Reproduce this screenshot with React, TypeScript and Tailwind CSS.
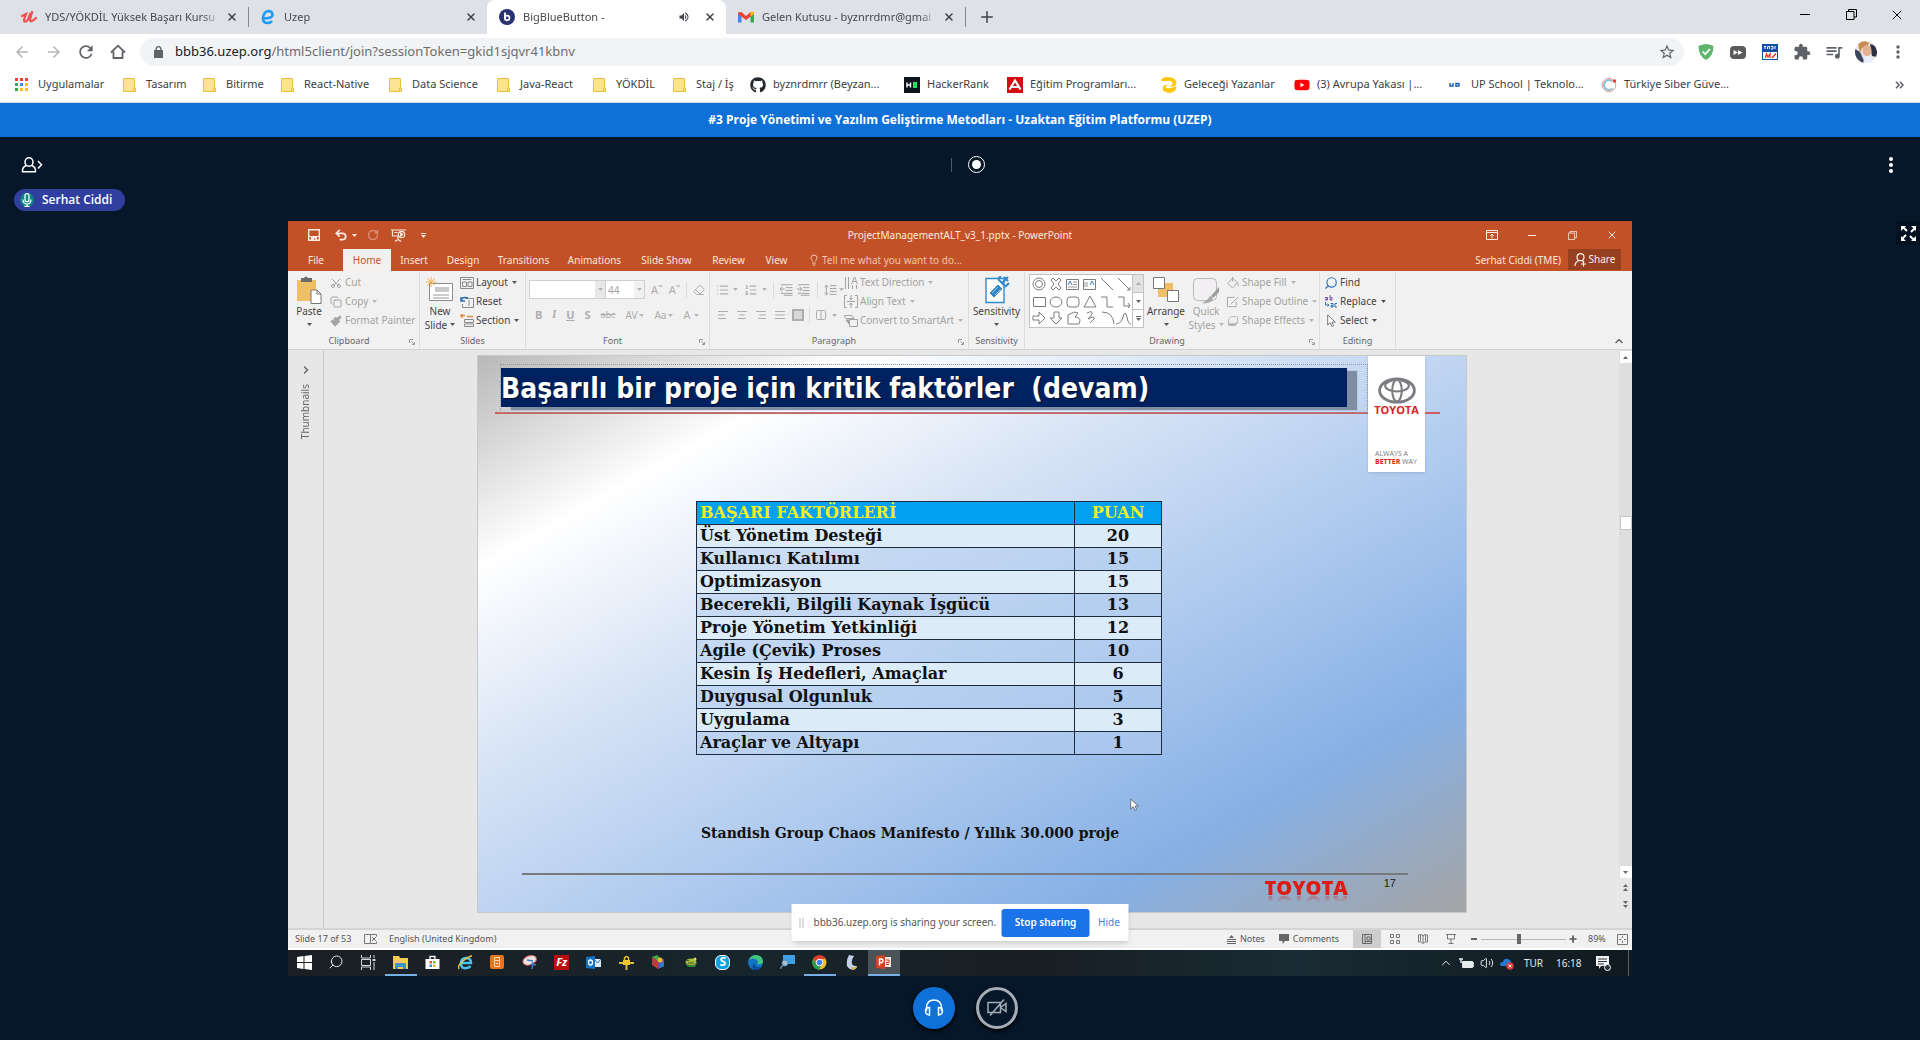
import React from "react";
import {
  RotateCw, X, Plus, Copy as CopyIcon, Scissors, Undo2, Search, Lightbulb, ChevronRight, ChevronUp,
  AlignLeft, AlignCenter, AlignRight, AlignJustify, List, ListOrdered, Eraser, Columns2, Paintbrush, Volume2,
} from "lucide-react";
import { FaGithub, FaYoutube } from "react-icons/fa";
import { MdArrowBack, MdArrowForward, MdRefresh, MdStarBorder, MdExtension, MdQueueMusic, MdMoreVert, MdVolumeUp } from "react-icons/md";

const UI = "font-['Noto_Sans','Open_Sans',sans-serif]";

type Kids = { children?: React.ReactNode };

/* ---------- small drawings ---------- */

function Caret({ className = "text-[#666]" }: { className?: string }) {
  return (
    <svg viewBox="0 0 5 3" className={`h-[3px] w-[5px] shrink-0 ${className}`}>
      <path d="M0 0h5L2.5 3z" fill="currentColor" />
    </svg>
  );
}

function Udemy() {
  return (
    <svg viewBox="0 0 16 16" className="h-4 w-4 shrink-0">
      <path d="M1 7l4-2-2 6q0 2 2 1.500T9 5l2-1M11 3L9 10q0 3 2 2t4-3" fill="none" stroke="#ec5252" strokeWidth="2.300" strokeLinecap="round" />
    </svg>
  );
}

function BlueE() {
  return (
    <svg viewBox="0 0 16 16" className="h-4 w-4 shrink-0">
      <path d="M3 9.500Q13 9.500 12.500 5.500 12 2 8.500 2 3.500 2.500 3 9.500 3 14 7.500 14q3 0 4.500-2" fill="none" stroke="#1c9cf6" strokeWidth="2.600" />
    </svg>
  );
}

function BBB() {
  return (
    <svg viewBox="0 0 16 16" className="h-4 w-4 shrink-0">
      <circle cx="8" cy="8" r="8" fill="#283274" />
      <path d="M6 3.500V9" stroke="#fff" strokeWidth="1.800" fill="none" />
      <circle cx="8.200" cy="9" r="2.300" stroke="#fff" strokeWidth="1.800" fill="none" />
    </svg>
  );
}

function Gmail() {
  return (
    <svg viewBox="0 0 16 12" className="h-3 w-4 shrink-0">
      <path d="M0 1.500V11.500H3.500V5z" fill="#4285f4" />
      <path d="M16 1.500V11.500H12.500V5z" fill="#34a853" />
      <path d="M0 1.500L3.500 1 8 5l4.500-4 3.500.5V3L8 9 0 3z" fill="#ea4335" />
      <path d="M12.500 1q3.500-1.500 3.500 2l-3.500 2.500z" fill="#fbbc04" />
    </svg>
  );
}

function Folder() {
  return (
    <svg viewBox="0 0 13 14" className="h-3.5 w-[13px] shrink-0">
      <path d="M.5.500h11v9.500h1v3.500H.5z" fill="#fee391" stroke="#e9c03f" />
      <path d="M10.500 13.500v-3.500h1.500" fill="none" stroke="#e9c03f" />
    </svg>
  );
}

function AppsGrid() {
  const c = ["#ea4335", "#ea4335", "#ea4335", "#34a853", "#4285f4", "#fbbc04", "#34a853", "#fbbc04", "#fbbc04"];
  return (
    <svg viewBox="0 0 13 13" className="h-[13px] w-[13px] shrink-0">
      {c.map((f, i) => (
        <rect key={i} x={(i % 3) * 5} y={Math.floor(i / 3) * 5} width="3" height="3" fill={f} />
      ))}
    </svg>
  );
}

function Restore({ className = "h-[11px] w-[11px]" }: { className?: string }) {
  return (
    <svg viewBox="0 0 11 11" className={className}>
      <path d="M.5 2.500h7.500v8H.5zM2.500 2.500V.500h8v7.500H8" fill="none" stroke="currentColor" />
    </svg>
  );
}

function Avatar() {
  return (
    <svg viewBox="0 0 22 22" className="h-[22px] w-[22px]">
      <defs><clipPath id="av"><circle cx="11" cy="11" r="11" /></clipPath></defs>
      <g clipPath="url(#av)">
        <rect width="22" height="22" fill="#e9e4e2" />
        <path d="M15 3q6 1 7 7v6l-5-1z" fill="#2c2f3d" />
        <path d="M0 8l5 3 5 11H0z" fill="#39475c" />
        <path d="M3 2q5-4 11 0l-2 4-5 1-2 5z" fill="#c98b52" />
        <ellipse cx="12" cy="9.500" rx="4.500" ry="5.500" fill="#e3b294" />
        <path d="M10 15l5 0 4 7H8z" fill="#eaf0fb" />
      </g>
    </svg>
  );
}

function ToyotaMark() {
  return (
    <svg viewBox="0 0 40 28" className="h-[27px] w-[38px]" fill="none" stroke="#7b7d80">
      <ellipse cx="20" cy="14" rx="18.300" ry="12.300" strokeWidth="3" />
      <ellipse cx="20" cy="9" rx="12.500" ry="6" strokeWidth="2.200" />
      <ellipse cx="20" cy="14" rx="5" ry="11.500" strokeWidth="2.200" />
    </svg>
  );
}

/* ---------- browser chrome ---------- */

function Tab({ icon, title, active, audio, divider }: { icon: React.ReactNode; title: string; active?: boolean; audio?: boolean; divider?: boolean }) {
  return (
    <div className={`relative flex h-full w-[239px] items-center pl-3 pr-2 ${active ? "rounded-t-lg bg-white" : ""}`}>
      {icon}
      <button className="ml-2 flex-1 whitespace-nowrap text-left text-[11px] text-[#45494d] [mask-image:linear-gradient(to_right,#000_90%,transparent)]">{title}</button>
      {audio && <MdVolumeUp className="mr-2 h-3 w-3 shrink-0 text-[#45494d]" />}
      <button aria-label="Close tab" className="ml-1 flex h-4 w-4 shrink-0 items-center justify-center text-[#3c4043]">
        <X className="h-3 w-3" strokeWidth={3} />
      </button>
      {divider && <span className="absolute right-[-1px] top-[7px] h-5 w-px bg-[#85898d]" />}
    </div>
  );
}

function TabStrip() {
  return (
    <div className="flex h-[34px] items-stretch bg-[#dee1e6] pl-[9px]">
      <Tab icon={<Udemy />} title="YDS/YÖKDİL Yüksek Başarı Kursu" divider />
      <Tab icon={<BlueE />} title="Uzep" />
      <Tab icon={<BBB />} title="BigBlueButton -" active audio />
      <Tab icon={<Gmail />} title="Gelen Kutusu - byznrrdmr@gmai" divider />
      <button aria-label="New tab" className="ml-2.5 flex w-6 items-center justify-center text-[#3c4043]">
        <Plus className="h-[18px] w-[18px]" />
      </button>
      <div className="ml-auto flex h-[29px] text-black">
        <button aria-label="Minimize" className="flex w-[46px] items-center justify-center"><span className="h-px w-2.5 bg-black" /></button>
        <button aria-label="Restore" className="flex w-[46px] items-center justify-center"><Restore /></button>
        <button aria-label="Close" className="flex w-[46px] items-center justify-center"><X className="h-4 w-4" strokeWidth={1.4} /></button>
      </div>
    </div>
  );
}

function ToolBtn({ label, children }: Kids & { label: string }) {
  return <button aria-label={label} className="flex h-8 w-8 shrink-0 items-center justify-center text-[#5f6368]">{children}</button>;
}

function AddressBar() {
  return (
    <div className="flex h-[35px] items-center bg-white px-1.5 pt-px">
      <ToolBtn label="Back"><MdArrowBack className="h-[18px] w-[18px] text-[#b4b6b9]" /></ToolBtn>
      <ToolBtn label="Forward"><MdArrowForward className="h-[18px] w-[18px] text-[#b4b6b9]" /></ToolBtn>
      <ToolBtn label="Reload"><MdRefresh className="h-5 w-5" /></ToolBtn>
      <ToolBtn label="Home">
        <svg viewBox="0 0 16 16" className="h-4 w-4"><path d="M3.500 7.500V14h9V7.500M1 8.500L8 1.700l7 6.800" fill="none" stroke="currentColor" strokeWidth="1.800" /></svg>
      </ToolBtn>
      <div className="ml-1.5 mr-1.5 flex h-7 flex-1 items-center rounded-full bg-[#f1f3f4] pl-3.5 pr-2">
        <svg viewBox="0 0 9 12" className="h-3 w-[9px] shrink-0"><path d="M0 4h9v8H0z" fill="#5f6368" /><path d="M2.200 4.500V3a2.300 2.300 0 0 1 4.600 0v1.500" fill="none" stroke="#5f6368" strokeWidth="1.300" /></svg>
        <div className="ml-3 flex-1 whitespace-nowrap text-[13px] text-[#6a6e72]"><span className="text-[#202124]">bbb36.uzep.org</span>/html5client/join?sessionToken=gkid1sjqvr41kbnv</div>
        <MdStarBorder className="h-[18px] w-[18px] text-[#5f6368]" />
      </div>
      <ToolBtn label="AdGuard">
        <svg viewBox="0 0 16 16" className="h-4 w-4"><path d="M.5 2Q5 0 8 0t7.500 2q0 10-7.500 14Q.5 12 .5 2z" fill="#5fb56b" /><path d="M4.500 7.500l2.700 2.700L12 5" fill="none" stroke="#fff" strokeWidth="1.700" /></svg>
      </ToolBtn>
      <ToolBtn label="Playback speed">
        <svg viewBox="0 0 16 13" className="h-[13px] w-4"><rect width="16" height="13" rx="4" fill="#5b5b5b" /><path d="M3.500 4l4.500 2.500-4.500 2.500zM8 4l4.500 2.500L8 9z" fill="#fff" /></svg>
      </ToolBtn>
      <ToolBtn label="Sabis">
        <svg viewBox="0 0 16 16" className="h-4 w-4"><path d="M0 0h16v16H0z" fill="#0d4ea6" /><path d="M1 8h14v7H1z" fill="#fff" /><path d="M2 2.500h2M2 4h2M5.500 5V2.500h2V5M9 2.500h2V5H9M13 2v3" stroke="#fff" fill="none" /><path d="M3.500 14l1-4 1.500 3 2-3v4M10 14l4-4.500" stroke="#e2312c" strokeWidth="1.300" fill="none" /></svg>
      </ToolBtn>
      <ToolBtn label="Extensions"><MdExtension className="h-[18px] w-[18px]" /></ToolBtn>
      <ToolBtn label="Media"><MdQueueMusic className="h-5 w-5" /></ToolBtn>
      <ToolBtn label="Profile"><Avatar /></ToolBtn>
      <ToolBtn label="Menu"><MdMoreVert className="h-5 w-5" /></ToolBtn>
    </div>
  );
}

function Bookmark({ w, icon, children }: Kids & { w: string; icon: React.ReactNode }) {
  return (
    <a href="#" className={`flex shrink-0 items-center ${w}`}>
      <span className="flex w-[23px] shrink-0 items-center">{icon}</span>
      <span className="whitespace-nowrap">{children}</span>
    </a>
  );
}

function Bookmarks() {
  return (
    <nav className="flex h-[34px] items-center border-b border-[#d5d8dc] bg-white pb-0.5 pl-[15px] pr-4 text-[11px] text-[#3c4043]">
      <Bookmark w="w-[108px]" icon={<AppsGrid />}>Uygulamalar</Bookmark>
      <Bookmark w="w-20" icon={<Folder />}>Tasarım</Bookmark>
      <Bookmark w="w-[78px]" icon={<Folder />}>Bitirme</Bookmark>
      <Bookmark w="w-[108px]" icon={<Folder />}>React-Native</Bookmark>
      <Bookmark w="w-[108px]" icon={<Folder />}>Data Science</Bookmark>
      <Bookmark w="w-24" icon={<Folder />}>Java-React</Bookmark>
      <Bookmark w="w-20" icon={<Folder />}>YÖKDİL</Bookmark>
      <Bookmark w="w-[77px]" icon={<Folder />}>Staj / İş</Bookmark>
      <Bookmark w="w-[154px]" icon={<FaGithub className="h-4 w-4 text-[#24292e]" />}>byznrdmrr (Beyzan...</Bookmark>
      <Bookmark w="w-[103px]" icon={<svg viewBox="0 0 16 16" className="h-4 w-4"><path d="M0 0h16v16H0z" fill="#0e141e" /><path d="M3 5.500v5M6.500 5.500v5M3 8h3.500" stroke="#fff" strokeWidth="1.400" /><path d="M9 5h4v6H9z" fill="#1ee65c" /></svg>}>HackerRank</Bookmark>
      <Bookmark w="w-[154px]" icon={<svg viewBox="0 0 16 16" className="h-4 w-4"><path d="M0 0h16v16H0z" fill="#d40d12" /><path d="M2.500 12.500L8 3.500l5.500 9M5 10h6" fill="none" stroke="#fff" strokeWidth="2.200" /></svg>}>Eğitim Programları...</Bookmark>
      <Bookmark w="w-[133px]" icon={<svg viewBox="0 0 16 16" className="h-4 w-4"><path d="M0 3q2-3 6-3 9 0 9.500 6-1 5-8 3 4 0 4-2.500Q11 3 5 4 1 5 0 3z" fill="#fdc60a" /><path d="M15.500 9q0 6-7 7Q1 15 1.500 11q1-4 7-3-4 0-4 2 1 2 5 1t6-2z" fill="#fdc60a" /></svg>}>Geleceği Yazanlar</Bookmark>
      <Bookmark w="w-[154px]" icon={<FaYoutube className="h-4 w-4 text-[#f00]" />}>(3) Avrupa Yakası |...</Bookmark>
      <Bookmark w="w-[153px]" icon={<svg viewBox="0 0 16 16" className="h-4 w-4" fill="none" stroke="#1a66b5" strokeWidth="1.500"><path d="M2 6v3h3V6M8 10V6.500h3V9H8" /></svg>}>UP School | Teknolo...</Bookmark>
      <Bookmark w="w-[150px]" icon={<svg viewBox="0 0 16 16" className="h-4 w-4" fill="none"><circle cx="8" cy="8" r="6.800" stroke="#ef9a94" /><path d="M11.500 4.500a5 5 0 1 0 0 7" stroke="#8bbfd1" strokeWidth="2" /><circle cx="13.500" cy="4" r="1.700" fill="#e53e38" /></svg>}>Türkiye Siber Güve...</Bookmark>
      <button aria-label="More bookmarks" className="ml-auto text-[#5f6368]">
        <svg viewBox="0 0 9 8" className="h-2 w-[9px]" fill="none" stroke="currentColor" strokeWidth="1.600"><path d="M1 .7L4 4 1 7.300M5 .7L8 4 5 7.300" /></svg>
      </button>
    </nav>
  );
}

/* ---------- PowerPoint ---------- */

function PptTitle() {
  return (
    <div className="flex h-7 items-center text-[10px] text-[#fbe9e2]">
      <div className="flex flex-1 items-center">
        <svg viewBox="0 0 12 12" className="ml-5 h-3 w-3"><path d="M.7.700h10.600v10.600H.7z" fill="none" stroke="currentColor" strokeWidth="1.400" /><path d="M1 7h10v1H1zM3 8h6v4H7.500V9.500H6V12H3z" fill="currentColor" /></svg>
        <Undo2 className="ml-3.5 h-3.5 w-3.5" strokeWidth={3} />
        <span className="ml-1"><Caret className="text-[#fbe9e2]" /></span>
        <RotateCw className="ml-2.5 h-3 w-3 opacity-40" strokeWidth={3} />
        <svg viewBox="0 0 15 13" className="ml-3 h-[13px] w-[15px]" fill="none" stroke="currentColor" strokeWidth="1.200"><path d="M0 1h15M1.500 1v6h6M7 7.500v3M4 12.500l3-2 3 2M3.500 3.500h3" /><circle cx="10.500" cy="5.500" r="3.200" /><path d="M9.700 4v3l2-1.500z" fill="currentColor" /></svg>
        <span className="ml-[15px] flex flex-col gap-px"><span className="h-px w-[5px] bg-[#fbe9e2]" /><Caret className="text-[#fbe9e2]" /></span>
      </div>
      <div className="text-[10px]">ProjectManagementALT_v3_1.pptx - PowerPoint</div>
      <div className="flex flex-1 justify-end">
        {[
          <svg key="r" viewBox="0 0 12 10" className="h-2.5 w-3" fill="none" stroke="currentColor"><path d="M.5.500h11v9H.5zM.5 2.500h11M6 8.500V4M4 6l2-2 2 2" /></svg>,
          <span key="m" className="h-px w-2 bg-[#fbe9e2]" />,
          <Restore key="s" className="h-[9px] w-[9px]" />,
          <X key="x" className="h-3 w-3" strokeWidth={2} />,
        ].map((n, i) => (
          <button key={i} aria-label={["Ribbon display", "Minimize", "Restore", "Close"][i]} className="flex h-6 w-10 items-center justify-center">{n}</button>
        ))}
      </div>
    </div>
  );
}

function PptTabs() {
  const tabs: [string, string][] = [
    ["File", "w-[54px]"], ["Home", "w-12"], ["Insert", "w-[46px]"], ["Design", "w-[52px]"], ["Transitions", "w-[69px]"],
    ["Animations", "w-[73px]"], ["Slide Show", "w-[71px]"], ["Review", "w-[53px]"], ["View", "w-[43px]"],
  ];
  return (
    <div className="flex h-[22px] items-stretch pl-px text-[10px] text-[#fbe6dd]">
      {tabs.map(([t, w]) => (
        <button key={t} className={`${w} whitespace-nowrap ${t === "Home" ? "bg-[#f2f1f0] text-[#c8512a]" : ""}`}>{t}</button>
      ))}
      <label className="flex items-center pl-2.5 text-[#f2c3ae]">
        <Lightbulb className="mr-0.5 h-3.5 w-3" />
        <input aria-label="Tell me" placeholder="Tell me what you want to do..." className="w-40 bg-transparent outline-none placeholder:text-[#f2c3ae]" />
      </label>
      <span className="ml-auto mr-[7px] self-center">Serhat Ciddi (TME)</span>
      <button className="mb-px mr-[11px] flex w-[53px] items-center justify-center gap-0.5 bg-[#97401f] text-[#fdf0ea]">
        <svg viewBox="0 0 13 14" className="h-3.5 w-[13px]" fill="none" stroke="currentColor" strokeWidth="1.200"><circle cx="6.500" cy="4.200" r="3.500" /><path d="M1 13q0-4 4-5.500M8 7.500l2 1.500M9.500 8.500v5M7 11h5" /></svg>
        Share
      </button>
    </div>
  );
}

function Group({ label, w, children, launcher }: Kids & { label: string; w: string; launcher?: boolean }) {
  return (
    <section className={`relative flex shrink-0 flex-col border-r border-[#dcdcdc] ${w}`}>
      <div className="flex h-[61px]">{children}</div>
      <div className={`text-center text-[9px] leading-4 text-[#666] ${launcher ? "pr-2.5" : ""}`}>{label}</div>
      {launcher && (
        <svg viewBox="0 0 6 6" className="absolute bottom-1 right-1 h-1.5 w-1.5" fill="none" stroke="#999"><path d="M.5 4V.500H4M2.500 2.500l3 3M5.500 3v2.500H3" /></svg>
      )}
    </section>
  );
}

function Rows({ children, className = "" }: Kids & { className?: string }) {
  return <div className={`pt-px ${className}`}>{children}</div>;
}

function Row({ icon, children, dim, caret }: Kids & { icon: React.ReactNode; dim?: boolean; caret?: boolean }) {
  return (
    <button className={`flex h-[19px] items-center gap-0.5 whitespace-nowrap text-[10px] ${dim ? "text-[#a3a3a3]" : "text-[#444]"}`}>
      <span className="flex w-3.5 justify-center">{icon}</span>
      {children}
      {caret && <span className="ml-0.5"><Caret className={dim ? "text-[#b5b5b5]" : "text-[#555]"} /></span>}
    </button>
  );
}

function Big({ icon, l1, l2, dim, w }: { icon: React.ReactNode; l1: string; l2?: string; dim?: boolean; w: string }) {
  return (
    <button className={`flex shrink-0 flex-col items-center pt-1 text-[10px] leading-[14px] ${w} ${dim ? "text-[#a3a3a3]" : "text-[#444]"}`}>
      <span className="flex h-7 items-center">{icon}</span>
      <span>{l1}</span>
      <span className="flex h-[13px] items-center gap-[3px] whitespace-nowrap">{l2}<Caret className={dim ? "text-[#b5b5b5]" : "text-[#555]"} /></span>
    </button>
  );
}

const gi = "h-3.5 w-3.5 text-[#adadad]";

function ShapesGallery() {
  return (
    <div className="ml-1 mt-0.5 flex h-[54px] w-[115px] shrink-0 border border-[#c2c2c2] bg-white">
      <svg viewBox="0 0 102 52" className="h-[52px] w-[102px]" fill="none" stroke="#7c7c7c">
        <circle cx="9" cy="9" r="6" /><circle cx="9" cy="9" r="3.500" />
        <path d="M21 5l2-2 3 3 3-3 2 2-3 4 3 4-2 2-3-3-3 3-2-2 3-4z" />
        <path d="M36.500 4.500h12v10h-12zM53.500 4.500h12v10h-12z" /><path d="M43 7h4M43 9.500h4M38 12h9M55 7v5M57 7v5" stroke="#9a9a9a" />
        <path d="M38 10l2-4 2 4M60 10l2-4 2 4" stroke="#3f7fc0" />
        <path d="M71 3l12 12M88 3l12 12M97 15h3v-3" />
        <path d="M3.500 22.500h12v9h-12z" /><ellipse cx="26" cy="27" rx="6" ry="5" /><rect x="37" y="22" width="12" height="10" rx="3" />
        <path d="M60 21l6 11H54zM71 22h6v10h6M88 22h6v9h6M98 28l2 3-2 2" />
        <path d="M3 41h6v-4l6 6-6 6v-4H3zM24 37h5v6h3l-6 6-6-6h4zM38 49V40l6-3 4 1-3 4q5 0 5 4l-1 3zM57 38q6-3 5 1l-4 5q7-4 6 0l-4 4M72 37q11 0 12 12M86 49q5 0 7-7 2-8 4 0 1 7 4 7" />
      </svg>
      <div className="flex flex-1 flex-col divide-y divide-[#c2c2c2] border-l border-[#c2c2c2]">
        <span className="flex flex-1 items-center justify-center bg-[#e2e2e2]"><span className="rotate-180"><Caret className="text-[#aaa]" /></span></span>
        <span className="flex flex-1 items-center justify-center"><Caret /></span>
        <span className="flex flex-1 flex-col items-center justify-center gap-px"><span className="h-px w-[5px] bg-[#666]" /><Caret /></span>
      </div>
    </div>
  );
}

function Ribbon() {
  return (
    <div className="relative flex h-[79px] border-b border-[#d2d2d2] bg-[#f2f1f1] pl-px pt-px">
      <Group label="Clipboard" w="w-[131px]" launcher>
        <Big w="w-10" l1="Paste" icon={<svg viewBox="0 0 25 28" className="h-7 w-[25px]"><path d="M0 4h19v21H0z" fill="#efbf66" /><path d="M4 2h3q2-3 4 0h4v4H4z" fill="#6b6b6b" /><path d="M14 14h6l4 4v9.500H14z" fill="#fff" stroke="#777" /><path d="M20 14v4h4" fill="none" stroke="#777" /></svg>} />
        <Rows>
          <Row dim icon={<Scissors className="h-3 w-3 -rotate-90" />}>Cut</Row>
          <Row dim caret icon={<CopyIcon className="h-3 w-3" />}>Copy</Row>
          <Row dim icon={<Paintbrush className="h-3 w-3 fill-current" />}>Format Painter</Row>
        </Rows>
      </Group>
      <Group label="Slides" w="w-[106px]">
        <Big w="w-10" l1="New" l2="Slide" icon={<svg viewBox="0 0 28 26" className="h-[26px] w-7"><path d="M3.500 6.500h23v17h-23z" fill="#fff" stroke="#8b8b8b" /><path d="M9 10h14v5H9z" fill="#c9c9c9" /><path d="M7 18h16M7 21h16" stroke="#999" /><path d="M5 0v10M0 5h10M1.500 1.500l7 7M8.500 1.500l-7 7" stroke="#f0b04c" /></svg>} />
        <Rows>
          <Row caret icon={<svg viewBox="0 0 14 12" className="h-3 w-3.5" fill="none" stroke="#8a8a8a"><path d="M.5.500h13v11H.5zM2.500 2.500h9M2.500 5h4v4.500h-4zM8 5h4v4.500H8z" /></svg>}>Layout</Row>
          <Row icon={<svg viewBox="0 0 14 12" className="h-3 w-3.5" fill="none" stroke="#8a8a8a"><path d="M5 2.500h8.500v9h-11V8M9 4v6" /><path d="M1 5q1-5 7-3M1 1v4h4" stroke="#2a6fb4" strokeWidth="1.500" /></svg>}>Reset</Row>
          <Row caret icon={<svg viewBox="0 0 14 13" className="h-[13px] w-3.5" fill="none" stroke="#8a8a8a"><path d="M4.500 5.500h9v3h-9zM4.500 10h9v2.500h-9z" /><path d="M0 1.500h5M7 2.500h6M2 0v4" stroke="#e58a3c" strokeWidth="1.500" /></svg>}>Section</Row>
        </Rows>
      </Group>
      <Group label="Font" w="w-[184px]" launcher>
        <div className="flex-1 pl-[3px] pt-2 text-[#adadad]">
          <div className="flex items-center">
            <div className="flex h-[19px] w-[77px] border border-[#cfcfcf]">
              <select aria-label="Font name" className="flex-1 appearance-none bg-white" />
              <span className="flex w-2.5 items-center justify-center bg-[#e8e8e8]"><Caret className="text-[#b5b5b5]" /></span>
            </div>
            <div className="flex h-[19px] w-[39px] border border-l-0 border-[#cfcfcf]">
              <select aria-label="Font size" className="flex-1 appearance-none bg-white px-0.5 text-[10px] leading-4 text-[#a3a3a3]"><option>44</option></select>
              <span className="flex w-2.5 items-center justify-center bg-[#f2f1f1]"><Caret className="text-[#b5b5b5]" /></span>
            </div>
            <span className="ml-1.5 text-[11px] leading-4">Aˆ</span><span className="ml-1.5 text-[11px] leading-4">Aˇ</span>
            <span className="mx-1.5 h-4 w-px bg-[#dcdcdc]" /><Eraser className="h-3 w-3" />
          </div>
          <div className="mt-1.5 flex h-5 items-center gap-2.5 pl-1.5 text-[11px] leading-4">
            <b>B</b><i className="font-serif font-bold">I</i><u className="font-bold">U</u><b>S</b><s className="text-[9px]">abc</s>
            <span className="flex items-center gap-0.5 text-[10px]">AV<Caret className="text-[#b5b5b5]" /></span>
            <span className="flex items-center gap-0.5 text-[10px]">Aa<Caret className="text-[#b5b5b5]" /></span>
            <span className="flex items-center gap-1">A<Caret className="text-[#b5b5b5]" /></span>
          </div>
        </div>
      </Group>
      <Group label="Paragraph" w="w-[259px]" launcher>
        <div className="w-[134px] pl-1.5 pt-2">
          <div className="flex h-[19px] items-center">
            <List className={gi} /><span className="ml-1 mr-1.5"><Caret className="text-[#b5b5b5]" /></span>
            <ListOrdered className={gi} /><span className="ml-1"><Caret className="text-[#b5b5b5]" /></span>
            <span className="mx-1.5 h-4 w-px bg-[#dcdcdc]" />
            <svg viewBox="0 0 14 12" className="h-3 w-3.5 text-[#a2a2a2]" fill="none" stroke="currentColor"><path d="M1 .5h12M6 3.500h7M6 6.500h7M1 9.500h12M4 11.500h9M0 5h5M2.500 2.500L0 5l2.500 2.500" /></svg>
            <svg viewBox="0 0 14 12" className="ml-1 h-3 w-3.5 text-[#a2a2a2]" fill="none" stroke="currentColor"><path d="M1 .5h12M6 3.500h7M6 6.500h7M1 9.500h12M4 11.500h9M0 5h5M2.500 2.500L5 5 2.500 7.500" /></svg>
            <span className="mx-1.5 h-4 w-px bg-[#dcdcdc]" />
            <svg viewBox="0 0 14 12" className="h-3 w-3.5 text-[#a2a2a2]" fill="none" stroke="currentColor"><path d="M6 1.500h7M6 4.500h7M6 7.500h7M6 10.500h7M2.500 1v10M.5 3l2-2 2 2M.5 9l2 2 2-2" /></svg>
            <span className="ml-0.5"><Caret className="text-[#b5b5b5]" /></span>
          </div>
          <div className="mt-1.5 flex h-5 items-center gap-[5px]">
            <AlignLeft className="h-3 w-3.5 text-[#adadad]" /><AlignCenter className="h-3 w-3.5 text-[#adadad]" /><AlignRight className="h-3 w-3.5 text-[#adadad]" /><AlignJustify className="h-3 w-3.5 text-[#adadad]" />
            <span className="h-3 w-3 border-2 border-[#adadad] bg-[#d8d8d8]" /><span className="h-4 w-px bg-[#dcdcdc]" /><Columns2 className="h-3 w-3 text-[#adadad]" /><Caret className="text-[#b5b5b5]" />
          </div>
        </div>
        <Rows>
          <Row dim caret icon={<svg viewBox="0 0 14 14" className="h-3.5 w-3.5" fill="none" stroke="currentColor"><path d="M1.500 1v12M4.500 1v12M8.500 9v4M12.500 9v4M7.500 8l3-7 3 7M9 5.500h3" /></svg>}>Text Direction</Row>
          <Row dim caret icon={<svg viewBox="0 0 14 13" className="h-[13px] w-3.5" fill="none" stroke="currentColor"><path d="M3 .5H.5v12H3M11 .5h2.500v12H11M3 6.500h8M7 0v5M5.500 3L7 5l1.500-2M7 13V8M5.500 10L7 8l1.500 2" /></svg>}>Align Text</Row>
          <Row dim caret icon={<svg viewBox="0 0 14 12" className="h-3 w-3.5" fill="none" stroke="currentColor"><path d="M0 .5h8l2 3H2zM5.500 4.500h8v7h-8z" /><path d="M2 5h3v4z" fill="currentColor" /></svg>}>Convert to SmartArt</Row>
        </Rows>
      </Group>
      <Group label="Sensitivity" w="w-14">
        <Big w="w-full" l1="Sensitivity" icon={<svg viewBox="0 0 26 28" className="h-7 w-[26px]" fill="none"><path d="M2 2.500h18v24H2z" fill="#fff" stroke="#2e8bd0" strokeWidth="1.400" /><path d="M5 17l9-9 5 5-9 9z" fill="#2f84c6" stroke="#fff" /><path d="M8 17l6-6M11 19l6-6" stroke="#bcdcf3" strokeWidth=".8" /><path d="M14 3l3-3M18 7l6-6M22 10l3-3M14 3l8 8M20 1l4 4" stroke="#2e8bd0" strokeWidth="2" /></svg>} />
      </Group>
      <Group label="Drawing" w="w-[295px]" launcher>
        <ShapesGallery />
        <Big w="w-11" l1="Arrange" icon={<svg viewBox="0 0 26 26" className="h-[26px] w-[26px]"><path d="M5 6h15v14H5z" fill="#efbf66" /><path d="M.5.500h11v11H.5zM14.500 13.500h11v11h-11z" fill="#fff" stroke="#777" /></svg>} />
        <Big dim w="w-9" l1="Quick" l2="Styles" icon={<svg viewBox="0 0 27 27" className="h-[27px] w-[27px]"><rect x=".5" y="1.500" width="23" height="22" rx="4" fill="#f2eff2" stroke="#b9b9b9" /><path d="M26 10L18 19l2 2 6-6z" fill="#9a9a9a" /><path d="M17 19q4 2 2 5-4 3-10 2 5-2 8-7z" fill="#a8a8a8" /></svg>} />
        <Rows className="pl-0.5">
          <Row dim caret icon={<svg viewBox="0 0 13 13" className="h-3 w-3" fill="none" stroke="currentColor"><path d="M6 1L1 7l5 5 5-6zM6 0v5M11 6q2 3 1 4" /></svg>}>Shape Fill</Row>
          <Row dim caret icon={<svg viewBox="0 0 13 13" className="h-3 w-3" fill="none" stroke="currentColor"><path d="M8 1.500H.5v10H10V6M4 9l8-8" /></svg>}>Shape Outline</Row>
          <Row dim caret icon={<svg viewBox="0 0 13 13" className="h-3 w-3"><path d="M4 1h6q2 0 2 2v5l-3 4H3q-2 0-2-2V6z" fill="#b5b5b5" /><path d="M4 2h7v5l-2 2H2V6z" fill="#eee" /></svg>}>Shape Effects</Row>
        </Rows>
      </Group>
      <Group label="Editing" w="w-[76px]">
        <Rows className="pl-1">
          <Row icon={<Search className="h-3.5 w-3.5 -scale-x-100 text-[#2a72bd]" />}>Find</Row>
          <Row caret icon={<svg viewBox="0 0 14 13" className="h-[13px] w-3.5" fill="none"><path d="M1 2.500h2.500V5H1.500V4h2M6 0v5h2V2.500H6" stroke="#7b4aa8" /><path d="M1.500 7v3h3M3.500 9l1.500 1-1.500 1.500M6.500 8.500h2.500V12H7v-1.500h2M13 8.500h-2V12h2" stroke="#2a72bd" /></svg>}>Replace</Row>
          <Row caret icon={<svg viewBox="0 0 9 13" className="h-[13px] w-[9px]"><path d="M.7 1v10l2.500-2.300L5 12.500l1.600-.8L5 8.200h3.300z" fill="#fff" stroke="#777" /></svg>}>Select</Row>
        </Rows>
      </Group>
      <button aria-label="Collapse ribbon" className="absolute bottom-0.5 right-[7px] text-[#666]"><ChevronUp className="h-3 w-3" strokeWidth={3} /></button>
    </div>
  );
}

const FACTORS: [string, number][] = [
  ["Üst Yönetim Desteği", 20], ["Kullanıcı Katılımı", 15], ["Optimizasyon", 15], ["Becerekli, Bilgili Kaynak İşgücü", 13],
  ["Proje Yönetim Yetkinliği", 12], ["Agile (Çevik) Proses", 10], ["Kesin İş Hedefleri, Amaçlar", 6], ["Duygusal Olgunluk", 5],
  ["Uygulama", 3], ["Araçlar ve Altyapı", 1],
];

function Slide() {
  return (
    <article className="relative flex flex-1 flex-col bg-[linear-gradient(to_bottom_right,#b8b8b8_0%,#ffffff_19%,#d6e3f5_38%,#bbd2f1_52%,#86b0e5_80%,#a5a5a5_100%)] outline outline-[#c9c9c9]">
      <header className="flex items-start pl-[17px] pr-[26px]">
        <div className="h-[58px] flex-1 border-b-2 border-[#d0605c] pt-2">
          <div className="ml-[5px] h-[49px] border border-dotted border-[#8f98a8] pt-[3px]">
            <h1 className="mr-5 h-[39px] whitespace-pre bg-[#00215f] font-['DejaVu_Sans_Condensed','Noto_Sans',sans-serif] text-[28px] font-bold leading-[42px] text-white shadow-[10px_3px_1px_#7f8ea3] [text-shadow:1px_1px_1px_#001030]">Başarılı bir proje için kritik faktörler  (devam)</h1>
          </div>
        </div>
        <div className="flex h-[116px] w-[57px] flex-col items-center bg-white pt-[21px] shadow">
          <ToyotaMark />
          <b className="font-['Open_Sans',sans-serif] text-[11px] leading-3 text-[#d8241c]">TOYOTA</b>
          <span className="mb-1.5 mt-auto w-[43px] whitespace-nowrap font-['Open_Sans',sans-serif] text-[7px] leading-2 text-[#777]">ALWAYS A<br /><b className="text-[#d8241c]">BETTER</b> WAY</span>
        </div>
        <div className="h-[58px] w-[15px] border-b-2 border-[#d0605c]" />
      </header>
      <div className="ml-[218px] mr-[304px] mt-[29px]">
        <table className="w-full border-collapse border border-[#1d2b3c] font-['DejaVu_Serif',serif] text-[16px] font-bold leading-[22px] text-[#111]">
          <thead>
            <tr className="h-[23px] bg-[#03a1f1] text-[#f4f01c]">
              <th className="border border-[#1d2b3c] py-0 pl-[3px] text-left">BAŞARI FAKTÖRLERİ</th>
              <th className="w-[87px] border border-[#1d2b3c] p-0">PUAN</th>
            </tr>
          </thead>
          <tbody>
            {FACTORS.map(([name, points], i) => (
              <tr key={name} className={`h-[23px] ${i % 2 === 0 ? "bg-[#dcebf8]" : "bg-[#b4cdf0]/50"}`}>
                <td className="whitespace-nowrap border border-[#1d2b3c] py-0 pl-[3px]">{name}</td>
                <td className="border border-[#1d2b3c] p-0 text-center">{points}</td>
              </tr>
            ))}
          </tbody>
        </table>
      </div>
      <footer className="mt-auto">
        <p className="ml-[223px] whitespace-nowrap font-['DejaVu_Serif',serif] text-[14px] font-bold leading-4 text-[#111]">Standish Group Chaos Manifesto / Yıllık 30.000 proje</p>
        <div className="ml-[44px] mr-[58px] mt-8 flex h-[39px] items-start justify-end border-t-2 border-[#77797c] pr-3 pt-0.5 text-[#222]">
          <b className="mr-9 mt-0.5 font-['Open_Sans',sans-serif] text-[20px] font-extrabold leading-[18px] text-[#dc1c12] [-webkit-box-reflect:below_-3px_linear-gradient(transparent_55%,rgba(0,0,0,0.5))]">TOYOTA</b>
          <span className="font-['Liberation_Sans',sans-serif] text-[11px] leading-3">17</span>
        </div>
      </footer>
      <svg viewBox="0 0 9 13" className="absolute right-[327px] top-[442px] h-[13px] w-[9px]"><path d="M.7 1v10l2.500-2.300L5 12.500l1.600-.8L5 8.200h3.300z" fill="#fff" stroke="#555" strokeWidth=".8" /></svg>
    </article>
  );
}

function VScroll() {
  const dbl = "flex h-4 w-full flex-col items-center justify-center gap-px";
  return (
    <div className="flex w-[13px] flex-col items-center bg-[#dedede] pt-px">
      <span className="flex h-3 w-3 items-center justify-center bg-white"><span className="rotate-180"><Caret /></span></span>
      <span className="flex-[30]" />
      <span className="h-3.5 w-3 border border-[#c6c6c6] bg-white" />
      <span className="flex-[66]" />
      <span className="flex h-3 w-3 items-center justify-center bg-white"><Caret /></span>
      <div className="w-full bg-[#e7e7e7] pb-4 pt-0.5">
        <span className={`${dbl} rotate-180`}><Caret /><Caret /></span>
        <span className={dbl}><Caret /><Caret /></span>
      </div>
    </div>
  );
}

function StatusBar() {
  return (
    <div className="flex h-[22px] items-center border-b-2 border-t-2 border-b-white border-t-[#d4d4d4] bg-[#f2f1f1] pl-[7px] pr-1 text-[9px] text-[#555]">
      <span className="w-[69px]">Slide 17 of 53</span>
      <svg viewBox="0 0 13 12" className="h-3 w-[13px]" fill="none" stroke="#777"><path d="M6.500 1.500H.5v9h6zM6.500 1.500h6v2M6.500 10.500h6v-2M8 4l4 4M12 4L8 8" /></svg>
      <span className="ml-3">English (United Kingdom)</span>
      <span className="flex-1" />
      <button className="flex items-center gap-1"><svg viewBox="0 0 9 9" className="h-[9px] w-[9px]"><path d="M2 3l2.500-3L7 3zM0 4h9v1H0zM0 6h9v1H0zM0 8h9v1H0z" fill="#666" /></svg>Notes</button>
      <button className="ml-3.5 flex items-center gap-1"><svg viewBox="0 0 10 10" className="h-2.5 w-2.5"><path d="M0 0h10v7H6L3.500 10V7H0z" fill="#666" /></svg>Comments</button>
      <div className="ml-3.5 flex h-full items-center">
        <span className="flex h-full w-7 items-center justify-center bg-[#cdcdcd]"><svg viewBox="0 0 10 10" className="h-2.5 w-2.5" fill="none" stroke="#666"><path d="M.5.500h9v9h-9zM3 .5v9M5 3h3v3H5zM3 7.500h6" /></svg></span>
        <span className="flex w-7 justify-center"><svg viewBox="0 0 10 10" className="h-2.5 w-2.5" fill="none" stroke="#777"><path d="M.5.500h3v3h-3zM6.500.500h3v3h-3zM.5 6.500h3v3h-3zM6.500 6.500h3v3h-3z" /></svg></span>
        <span className="flex w-7 justify-center"><svg viewBox="0 0 10 10" className="h-2.5 w-2.5" fill="none" stroke="#777"><path d="M5 1.500Q3 0 .5 1v7Q3 7 5 9.500 7 7 9.500 8V1Q7 0 5 1.500zV9M2.500 1v6M7.500 1v6" /></svg></span>
        <span className="flex w-7 justify-center"><svg viewBox="0 0 10 10" className="h-2.5 w-2.5" fill="none" stroke="#777"><path d="M0 .5h10M1.500.500v4.500h7V.500M5 5v4M2.500 9.500h5" /></svg></span>
      </div>
      <span className="ml-1.5 h-0.5 w-1.5 bg-[#666]" />
      <input aria-label="Zoom" type="range" defaultValue="44" className="ml-1 h-3 w-[85px] appearance-none bg-[linear-gradient(#b5b5b5,#b5b5b5)] bg-[length:100%_1px] bg-center bg-no-repeat [&::-webkit-slider-thumb]:h-2.5 [&::-webkit-slider-thumb]:w-1 [&::-webkit-slider-thumb]:appearance-none [&::-webkit-slider-thumb]:bg-[#666]" />
      <Plus className="ml-0.5 h-2.5 w-2.5 text-[#555]" strokeWidth={4} />
      <span className="ml-2.5 w-[29px]">89%</span>
      <svg viewBox="0 0 11 11" className="h-[11px] w-[11px]" fill="none" stroke="#777"><path d="M.5.500h10v10H.5zM5.500 2v2M5.500 7v2M2 5.500h2M7 5.500h2" /></svg>
    </div>
  );
}

function Task({ children, run, active }: Kids & { run?: boolean; active?: boolean }) {
  return (
    <span className={`flex h-full w-8 items-center justify-center border-b-2 ${active ? "bg-[#4a5358]" : ""} ${run ? "border-[#76b0e6]" : "border-transparent"}`}>
      {children}
    </span>
  );
}

const t4 = "h-[15px] w-[15px]";

function Taskbar() {
  return (
    <div className="flex h-[26px] items-center bg-[linear-gradient(to_right,#1b1f23,#17252c_35%,#181e23_55%,#192b34_75%,#10191f)] text-[10px] text-[#e6e9eb]">
      <div className="flex h-full w-[612px] justify-between">
        <Task><svg viewBox="0 0 15 15" className={t4}><path d="M0 2l6.500-1v6H0zM7.500 1L15 0v7H7.500zM0 8h6.500v6L0 13zM7.500 8H15v7l-7.500-1z" fill="#fff" /></svg></Task>
        <Task><Search className="h-4 w-4 -scale-x-100" strokeWidth={1.5} /></Task>
        <Task><svg viewBox="0 0 15 15" className={t4} fill="none" stroke="#d5d8da"><path d="M.5 0v3h9V0M.5 15v-3h9v3M.5 4.500h9v6h-9zM13 0v3M13 7v8" /><path d="M11.500 5h3" strokeWidth="2" /></svg></Task>
        <Task run><svg viewBox="0 0 15 13" className="h-[13px] w-[15px]"><path d="M0 0h6l1 2h8v11H0z" fill="#f5cb55" /><path d="M2 13V8q0-1 1-1h9q1 0 1 1v5h-3v-2H5v2z" fill="#3f92cf" /></svg></Task>
        <Task><svg viewBox="0 0 15 15" className={t4}><path d="M.5 4h14v10h-14z" fill="#fff" /><path d="M5 4V1.500h5V4" fill="none" stroke="#fff" strokeWidth="1.300" /><path d="M4.500 6h2.500v2.500H4.500z" fill="#e85b31" /><path d="M8 6h2.500v2.500H8z" fill="#7cb83d" /><path d="M4.500 9.500h2.500V12H4.500z" fill="#2f8fd6" /><path d="M8 9.500h2.500V12H8z" fill="#f2b52a" /></svg></Task>
        <Task><svg viewBox="0 0 15 15" className={t4} fill="none"><path d="M3 8h10q0-5-5-5T3 8.500 8 13q3 0 4.500-2" stroke="#4cc1ee" strokeWidth="2.500" /><path d="M1 14q-2-3 4-8t9-5" stroke="#efc63c" strokeWidth="1.300" /></svg></Task>
        <Task><svg viewBox="0 0 14 14" className="h-3.5 w-3.5"><rect width="14" height="14" rx="2" fill="#e2781d" /><path d="M4.500 2.500h5v9h-5zM4.500 5.500h5M6 8.500h2" stroke="#fbd8ab" fill="none" /></svg></Task>
        <Task><svg viewBox="0 0 15 15" className={t4}><ellipse cx="7.500" cy="5.500" rx="7" ry="4.500" transform="rotate(-20 7 5)" fill="#eee3e3" stroke="#d25a5a" /><path d="M5 5l6 1M9 9l5 1M11 7l-1 7" stroke="#3a84c4" strokeWidth="1.500" /></svg></Task>
        <Task><span className="flex h-[15px] w-[15px] items-center justify-center bg-[#b8100d] text-[11px] font-bold italic leading-3 text-white">Fz</span></Task>
        <Task><svg viewBox="0 0 15 13" className="h-[13px] w-[15px]"><path d="M8 3h7v8H8z" fill="#dcebf8" /><path d="M8 3l3.500 4L15 3" stroke="#1474c4" fill="none" /><path d="M0 1l9-1v13l-9-1z" fill="#1474c4" /><ellipse cx="4.500" cy="6.500" rx="2" ry="2.500" fill="none" stroke="#fff" strokeWidth="1.300" /></svg></Task>
        <Task><svg viewBox="0 0 15 15" className={t4}><path d="M0 8h15M7.500 6v9" stroke="#d6c23a" strokeWidth="2" /><path d="M4 5h7v5H4z" fill="#f1c530" /><path d="M5.500 5V3q2-3 4 0v2" stroke="#f1c530" strokeWidth="1.400" fill="none" /></svg></Task>
        <Task><svg viewBox="0 0 14 14" className="h-3.5 w-3.5"><path d="M1 2l6 4v8l-6-4z" fill="#c03a3a" /><path d="M7 6l6-2v7l-6 3z" fill="#8442b0" /><path d="M1 2l5-2 4 4-3 2z" fill="#43a844" /><circle cx="9" cy="5" r="2.500" fill="#f1b92f" /><path d="M9 9l4-2v4l-4 2z" fill="#2d7fd2" /></svg></Task>
        <Task><svg viewBox="0 0 14 11" className="h-[11px] w-3.5"><ellipse cx="7" cy="5" rx="5.500" ry="3.500" fill="#a5bb3c" /><path d="M1 6q6 6 12 0l-2 4H4z" fill="#2e8a3c" /><circle cx="11" cy="2" r="1.500" fill="#d8df5c" /><path d="M2 3l3 1M4 6h6" stroke="#335c20" /></svg></Task>
        <Task><span className="flex h-[15px] w-[15px] items-center justify-center rounded-md border border-white bg-[#0aa0e2] text-[12px] font-bold leading-3 text-white">S</span></Task>
        <Task><svg viewBox="0 0 15 15" className={t4}><circle cx="7.500" cy="7.500" r="7.500" fill="#1273c4" /><path d="M1 5q2-5 7-5 6 0 7 6 0 4-6 3 2-2 0-4Q5 2 1 5z" fill="#43c67a" /><path d="M6 8q1 5 7 4-3 4-7 3Q3 12 6 8z" fill="#0c4f97" /></svg></Task>
        <Task><svg viewBox="0 0 15 14" className="h-3.5 w-[15px]"><path d="M3 0h12v9H3z" fill="#3f9fe4" /><circle cx="5" cy="8" r="3" fill="#9fc4df" stroke="#5a86a8" /><path d="M3 10l-3 4" stroke="#6a8ba5" strokeWidth="1.500" /></svg></Task>
        <Task run><svg viewBox="0 0 15 15" className={t4}><circle cx="7.500" cy="7.500" r="7" fill="#f2c01e" /><path d="M1 4a7.500 7.500 0 0 1 13 0H7.500L5 8z" fill="#df3c2d" /><path d="M1 4a7.500 7.500 0 0 0 6 11l3-6H5z" fill="#2e9a4a" /><circle cx="7.500" cy="7.500" r="3.300" fill="#3f7fe8" stroke="#fff" /></svg></Task>
        <Task><svg viewBox="0 0 13 15" className="h-[15px] w-[13px]"><path d="M4 0Q1 5 2 11q3 5 8 3 2-1 2-3-4 0-5-2Q6 5 9 1z" fill="#c4d0e8" /><path d="M6 12q4 1 6-1-1 4-5 4z" fill="#d8b34b" /></svg></Task>
        <Task run active><svg viewBox="0 0 15 14" className="h-3.5 w-[15px]"><path d="M8 2h7v10H8z" fill="#f6e4dc" /><path d="M10 5h3v2.500h-3M10 9.500h3" stroke="#d04423" fill="none" /><path d="M0 1l9-1v14l-9-1z" fill="#d04423" /><path d="M3.500 10.500V4H5q2 0 2 1.800T5 7.500H3.500" fill="none" stroke="#fff" strokeWidth="1.400" /></svg></Task>
      </div>
      <span className="flex-1" />
      <ChevronUp className="h-3.5 w-3.5" strokeWidth={1.700} />
      <svg viewBox="0 0 15 11" className="ml-1.5 h-[11px] w-[15px]"><path d="M3.500 3.500h10v6h-10z" fill="#e6e9eb" stroke="#e6e9eb" /><path d="M0 1h4M2 1v4M14 5h1v3h-1" stroke="#e6e9eb" fill="none" strokeWidth="1.500" /></svg>
      <Volume2 className="ml-1.5 h-3.5 w-3.5" strokeWidth={1.700} />
      <svg viewBox="0 0 14 14" className="ml-1.5 h-3.5 w-3.5"><path d="M0 9q0-3 3-3 1-4 5-3 3 1 3 4v3H2Q0 10 0 9z" fill="#1d7bd0" /><circle cx="10" cy="10" r="3.700" fill="#d93a34" /><path d="M8.500 8.500l3 3M11.500 8.500l-3 3" stroke="#fff" /></svg>
      <span className="ml-2.5 w-8 leading-4">TUR</span>
      <span className="w-10 leading-4">16:18</span>
      <svg viewBox="0 0 15 15" className={t4}><path d="M0 0h13v10H5l-2 3v-3H0z" fill="#f1f3f4" /><path d="M2 3h9M2 5.500h9M2 8h6" stroke="#26343c" /><circle cx="11.500" cy="11.500" r="3" fill="#26343c" stroke="#fff" /></svg>
      <span className="ml-[17px] mr-[3px] h-full w-px bg-[#56606a]" />
    </div>
  );
}

function SharePopup() {
  return (
    <div className="absolute bottom-[35px] left-1/2 flex h-[37px] w-[337px] -translate-x-1/2 items-center bg-white pl-2 text-[10px] text-[#555] shadow-md">
      <span className="h-2.5 w-1 border-x border-[#bbb]" />
      <span className="ml-2.5 flex-1 whitespace-nowrap">bbb36.uzep.org is sharing your screen.</span>
      <button className="h-7 w-[88px] rounded-[3px] bg-[#1a73e8] font-semibold text-white">Stop sharing</button>
      <button className="w-[39px] text-[#4586d8]">Hide</button>
    </div>
  );
}

function SharedScreen() {
  return (
    <div className={`relative mx-auto flex aspect-[1344/755] w-[70%] flex-col overflow-hidden bg-[#e7e7e7] ${UI}`}>
      <div className="bg-[#c35127]">
        <PptTitle />
        <PptTabs />
      </div>
      <Ribbon />
      <div className="flex min-h-0 flex-1">
        <aside className="flex w-9 flex-col items-center gap-2 border-r border-[#c8c8c8] pt-3.5 text-[10px] text-[#666]">
          <ChevronRight className="h-3 w-3" strokeWidth={3} />
          <span className="rotate-180 whitespace-nowrap [writing-mode:vertical-rl]">Thumbnails</span>
        </aside>
        <div className="flex flex-1 pb-4 pl-[154px] pr-[153px] pt-1.5">
          <Slide />
        </div>
        <VScroll />
      </div>
      <StatusBar />
      <Taskbar />
      <SharePopup />
    </div>
  );
}

/* ---------- BigBlueButton ---------- */

function MeetingBar() {
  return (
    <div className="flex h-[52px] items-center px-[21px] pt-[3px] text-white">
      <button aria-label="Users" className="flex flex-1 items-center">
        <svg viewBox="0 0 22 16" className="h-4 w-[22px]" fill="none" stroke="#fff" strokeWidth="1.500"><ellipse cx="8" cy="5" rx="4" ry="4.300" /><path d="M5.500 8.500Q1 10 1.500 14.800h13Q15 10 10.500 8.500M17 4l3.500 3.800L17 11.500" /></svg>
      </button>
      <div className="flex items-center gap-4 pl-4">
        <span className="h-3.5 w-px bg-[#4d5a66]" />
        <button aria-label="Recording" className="flex h-[17px] w-[17px] items-center justify-center rounded-full border border-white"><span className="h-[9px] w-[9px] rounded-full bg-white" /></button>
      </div>
      <div className="flex flex-1 justify-end">
        <button aria-label="Options" className="flex w-4 flex-col items-center gap-0.5">
          <span className="h-1 w-1 rounded-full bg-white" /><span className="h-1 w-1 rounded-full bg-white" /><span className="h-1 w-1 rounded-full bg-white" />
        </button>
      </div>
    </div>
  );
}

export default function App() {
  return (
    <div className="flex min-h-screen flex-col bg-[#06172a]">
      <div className={UI}>
        <TabStrip />
        <AddressBar />
        <Bookmarks />
      </div>
      <div className="flex h-[34px] items-center justify-center bg-[#0f70d7] font-['Open_Sans',sans-serif] text-[12px] font-bold text-white">
        #3 Proje Yönetimi ve Yazılım Geliştirme Metodları - Uzaktan Eğitim Platformu (UZEP)
      </div>
      <MeetingBar />
      <div className="pl-3.5">
        <button className="flex h-[22px] w-[111px] items-center rounded-full bg-[#303f9f] pl-1.5 font-['Open_Sans',sans-serif] text-[12px] font-semibold text-white">
          <svg viewBox="0 0 14 14" className="mr-2 h-3.5 w-3.5 shrink-0" fill="none" stroke="#fff"><circle cx="7" cy="7" r="7" fill="#0d8484" stroke="none" /><rect x="5" y=".7" width="4" height="8" rx="2" strokeWidth="1.300" /><path d="M3 6.500q0 4.500 4 4.500t4-4.500M7 11v2.300M4.500 13.300h5" strokeWidth="1.200" /></svg>
          Serhat Ciddi
        </button>
      </div>
      <main className="relative pt-2.5">
        <SharedScreen />
        <button aria-label="Fullscreen" className="absolute right-0 top-2.5 flex h-6 w-6 items-center justify-center bg-[#031020]">
          <svg viewBox="0 0 15 15" className="h-[15px] w-[15px]"><path d="M0 0h5L3.700 1.300l3 3-1.400 1.400-3-3L0 5zM15 0v5l-1.300-1.300-3 3-1.400-1.400 3-3L10 0zM0 15v-5l1.300 1.300 3-3 1.400 1.400-3 3L5 15zM15 15h-5l1.300-1.300-3-3 1.400-1.400 3 3L15 10z" fill="#fff" /></svg>
        </button>
      </main>
      <div className="flex flex-1 items-center justify-center gap-[21px] pb-px pl-2.5">
        <button aria-label="Leave audio" className="flex h-[42px] w-[42px] items-center justify-center rounded-full bg-[#0f70d7] text-white shadow-[0_2px_4px_#000]">
          <svg viewBox="0 0 20 17" className="h-[17px] w-5" fill="none" stroke="#fff" strokeWidth="1.500"><path d="M2.500 12V8.500Q3 1 10 1t7.500 7.500V12" /><path d="M5.500 8.500Q1.500 8.500 1.500 12t4 4zM14.500 8.500q4 0 4 3.500t-4 4z" /></svg>
        </button>
        <button aria-label="Share webcam" className="flex h-[42px] w-[42px] items-center justify-center rounded-full border-[3px] border-[#a5acb5] shadow-[0_2px_4px_#000]">
          <svg viewBox="0 0 20 17" className="h-[17px] w-5" fill="none" stroke="#a5acb5" strokeWidth="1.500"><path d="M1 3.500h12.500v10H1zM13.500 8.500L19 4.500v8zM3 16.500L17 .5" /></svg>
        </button>
      </div>
    </div>
  );
}
